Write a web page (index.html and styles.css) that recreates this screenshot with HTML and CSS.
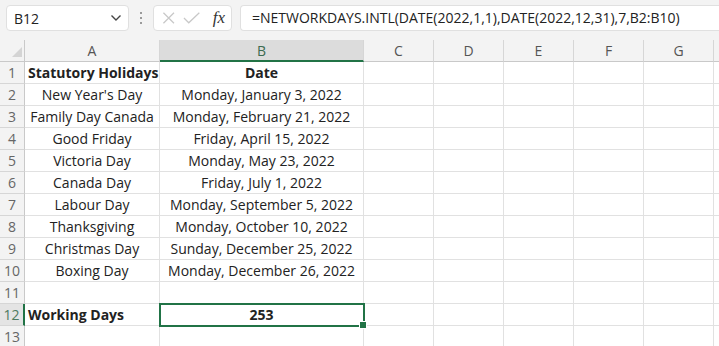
FILE: index.html
```html
<!DOCTYPE html>
<html>
<head>
<meta charset="utf-8">
<link rel="stylesheet" href="styles.css">
</head>
<body>
<div class="app">
  <div class="toolbar">
    <div class="namebox">
      <span class="ref">B12</span>
      <svg class="chev" width="12" height="8" viewBox="0 0 12 8"><path d="M1.5 1.5 L6 6 L10.5 1.5" fill="none" stroke="#444" stroke-width="1.4"/></svg>
    </div>
    <div class="dots"><span></span><span></span><span></span></div>
    <div class="fnbox">
      <svg width="14" height="14" viewBox="0 0 14 14"><path d="M1.5 1.5 L12.5 12.5 M12.5 1.5 L1.5 12.5" stroke="#c8c8c8" stroke-width="1.3"/></svg>
      <svg width="18" height="14" viewBox="0 0 18 14"><path d="M1 7 L6 12 L17 1.5" fill="none" stroke="#c8c8c8" stroke-width="1.3"/></svg>
      <span class="fx">fx</span>
    </div>
    <div class="formula">=NETWORKDAYS.INTL(DATE(2022,1,1),DATE(2022,12,31),7,B2:B10)</div>
  </div>
  <div class="sheet">
    <div class="corner"><svg width="10" height="10" viewBox="0 0 10 10"><path d="M10 0 L10 10 L0 10 Z" fill="#d4d4d4"/></svg></div>
    <div class="ch">A</div><div class="ch sel">B</div><div class="ch">C</div><div class="ch">D</div><div class="ch">E</div><div class="ch">F</div><div class="ch">G</div><div class="ch tail"></div>

    <div class="rh">1</div><div class="c b">Statutory Holidays</div><div class="c ctr b">Date</div><div class="c"></div><div class="c"></div><div class="c"></div><div class="c"></div><div class="c"></div><div class="c tail"></div>
    <div class="rh">2</div><div class="c ctr">New Year's Day</div><div class="c ctr">Monday, January 3, 2022</div><div class="c"></div><div class="c"></div><div class="c"></div><div class="c"></div><div class="c"></div><div class="c tail"></div>
    <div class="rh">3</div><div class="c ctr">Family Day Canada</div><div class="c ctr">Monday, February 21, 2022</div><div class="c"></div><div class="c"></div><div class="c"></div><div class="c"></div><div class="c"></div><div class="c tail"></div>
    <div class="rh">4</div><div class="c ctr">Good Friday</div><div class="c ctr">Friday, April 15, 2022</div><div class="c"></div><div class="c"></div><div class="c"></div><div class="c"></div><div class="c"></div><div class="c tail"></div>
    <div class="rh">5</div><div class="c ctr">Victoria Day</div><div class="c ctr">Monday, May 23, 2022</div><div class="c"></div><div class="c"></div><div class="c"></div><div class="c"></div><div class="c"></div><div class="c tail"></div>
    <div class="rh">6</div><div class="c ctr">Canada Day</div><div class="c ctr">Friday, July 1, 2022</div><div class="c"></div><div class="c"></div><div class="c"></div><div class="c"></div><div class="c"></div><div class="c tail"></div>
    <div class="rh">7</div><div class="c ctr">Labour Day</div><div class="c ctr">Monday, September 5, 2022</div><div class="c"></div><div class="c"></div><div class="c"></div><div class="c"></div><div class="c"></div><div class="c tail"></div>
    <div class="rh">8</div><div class="c ctr">Thanksgiving</div><div class="c ctr">Monday, October 10, 2022</div><div class="c"></div><div class="c"></div><div class="c"></div><div class="c"></div><div class="c"></div><div class="c tail"></div>
    <div class="rh">9</div><div class="c ctr">Christmas Day</div><div class="c ctr">Sunday, December 25, 2022</div><div class="c"></div><div class="c"></div><div class="c"></div><div class="c"></div><div class="c"></div><div class="c tail"></div>
    <div class="rh">10</div><div class="c ctr">Boxing Day</div><div class="c ctr">Monday, December 26, 2022</div><div class="c"></div><div class="c"></div><div class="c"></div><div class="c"></div><div class="c"></div><div class="c tail"></div>
    <div class="rh">11</div><div class="c"></div><div class="c"></div><div class="c"></div><div class="c"></div><div class="c"></div><div class="c"></div><div class="c"></div><div class="c tail"></div>
    <div class="rh rsel">12</div><div class="c b">Working Days</div><div class="c ctr b active">253</div><div class="c"></div><div class="c"></div><div class="c"></div><div class="c"></div><div class="c"></div><div class="c tail"></div>
    <div class="rh">13</div><div class="c"></div><div class="c"></div><div class="c"></div><div class="c"></div><div class="c"></div><div class="c"></div><div class="c"></div><div class="c tail"></div>
  </div>
</div>
</body>
</html>
```
FILE: styles.css
```css
* { box-sizing: border-box; }
html, body { margin: 0; padding: 0; background: #ffffff; overflow: hidden; }
body { font-family: "Open Sans", "Noto Sans", sans-serif; color: #222; }
.app { width: 719px; height: 346px; overflow: hidden; background: #f3f3f3; }
.toolbar { height: 40px; padding: 5px 0 0 6px; display: flex; align-items: flex-start; }
.namebox { width: 123px; height: 26px; background: #fff; border: 1px solid #e0e0e0; border-radius: 4px; display: flex; align-items: center; justify-content: space-between; padding: 0 6px 0 7px; font-size: 14px; }
.dots { width: 24px; height: 26px; display: flex; flex-direction: column; align-items: center; justify-content: center; gap: 3px; }
.dots span { width: 2px; height: 2px; background: #9a9a9a; display: block; }
.fnbox { width: 79px; height: 26px; background: #fff; border: 1px solid #e0e0e0; border-radius: 4px; display: flex; align-items: center; padding: 0 6px 0 8px; gap: 8px; }
.fx { font-family: "Liberation Serif", serif; font-style: italic; font-size: 17px; color: #333; margin-left: 4px; }
.formula { flex: 1; margin-left: 8px; height: 26px; background: #fff; border: 1px solid #e0e0e0; border-right: none; border-radius: 4px 0 0 4px; padding: 0 0 0 11px; font-size: 14px; line-height: 24px; white-space: nowrap; color: #222; }
.sheet { display: grid; grid-template-columns: 25px 135px 204px 70px 70px 70px 70px 70px 5px; grid-auto-rows: 22px; background: #fff; }
.corner { background: #f3f3f3; border-right: 1px solid #c9c9c9; border-bottom: 1px solid #c9c9c9; display: flex; align-items: flex-end; justify-content: flex-end; padding: 0 2px 4px 0; }
.ch { background: #f3f3f3; border-right: 1px solid #d6d6d6; border-bottom: 1px solid #c9c9c9; text-align: center; font-size: 14px; line-height: 21px; color: #555; }
.ch.sel { background: #dcdcdc; border-bottom: 2px solid #217346; color: #3d6b50; }
.ch.tail, .c.tail { border-right: none; }
.rh { background: #f3f3f3; border-right: 1px solid #c9c9c9; border-bottom: 1px solid #d6d6d6; text-align: center; font-size: 14px; line-height: 21px; color: #666; }
.rh.rsel { background: #e4e4e4; border-right: 2px solid #217346; color: #4d7a60; }
.c { border-right: 1px solid #e1e1e1; border-bottom: 1px solid #e1e1e1; font-size: 14px; line-height: 21px; white-space: nowrap; padding: 0 3px; color: #222; overflow: visible; }
.c.ctr { text-align: center; }
.c.b { font-weight: 700; }
.active { position: relative; outline: 2px solid #217346; outline-offset: -1px; }
.active::after { content: ""; position: absolute; right: -4px; bottom: -4px; width: 6px; height: 6px; background: #217346; border: 1px solid #fff; }
```
